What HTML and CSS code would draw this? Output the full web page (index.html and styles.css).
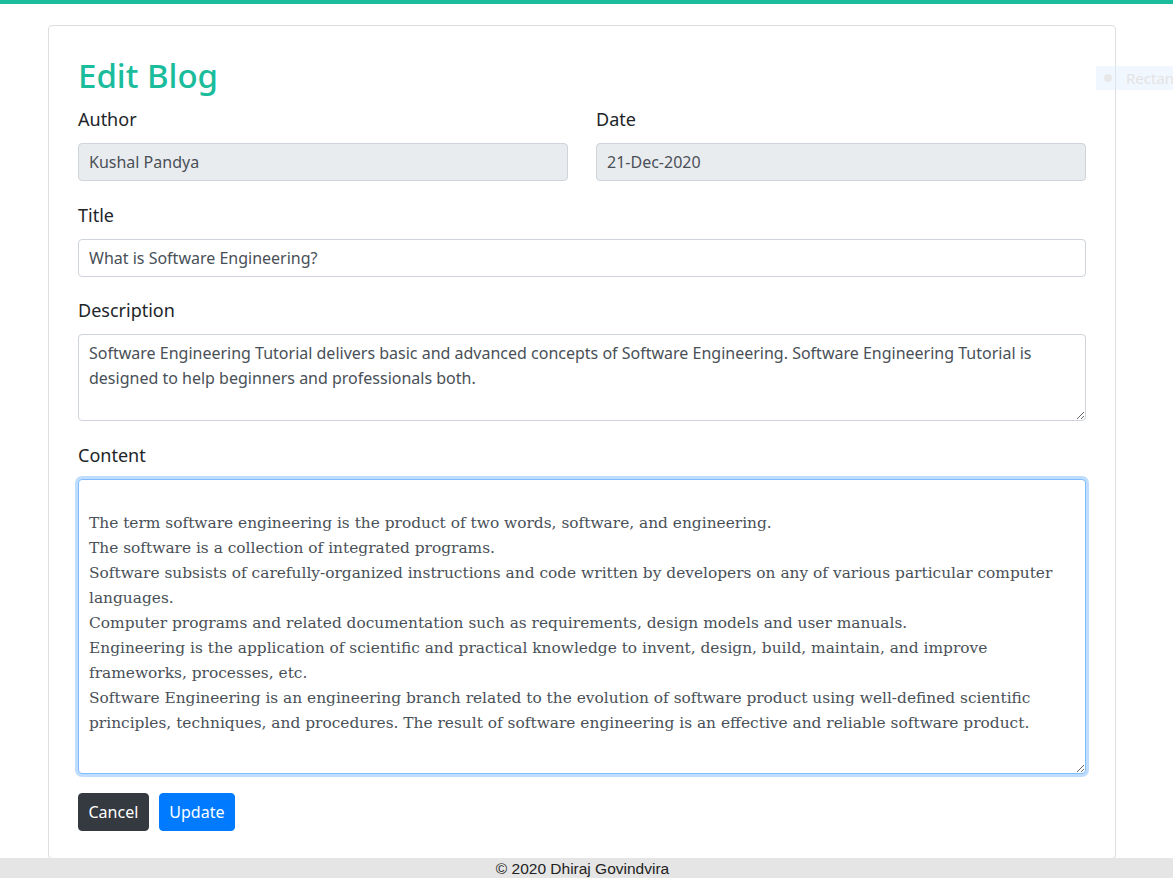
FILE: index.html
```html
<!DOCTYPE html>
<html lang="en">
<head>
<meta charset="utf-8">
<title>Edit Blog</title>
<link rel="stylesheet" href="styles.css">
</head>
<body>
<div class="topbar"></div>
<main class="card">
  <h1 class="title">Edit Blog</h1>
  <div class="row">
    <div class="group col">
      <label class="label">Author</label>
      <input class="control" type="text" value="Kushal Pandya" disabled>
    </div>
    <div class="group col">
      <label class="label">Date</label>
      <input class="control" type="text" value="21-Dec-2020" disabled>
    </div>
  </div>
  <div class="group">
    <label class="label">Title</label>
    <input class="control" type="text" value="What is Software Engineering?">
  </div>
  <div class="group group-wide">
    <label class="label">Description</label>
    <textarea class="control desc" rows="3">Software Engineering Tutorial delivers basic and advanced concepts of Software Engineering. Software Engineering Tutorial is
designed to help beginners and professionals both.</textarea>
  </div>
  <div class="group">
    <label class="label">Content</label>
    <textarea class="control content focused">

The term software engineering is the product of two words, software, and engineering.
The software is a collection of integrated programs.
Software subsists of carefully-organized instructions and code written by developers on any of various particular computer
languages.
Computer programs and related documentation such as requirements, design models and user manuals.
Engineering is the application of scientific and practical knowledge to invent, design, build, maintain, and improve
frameworks, processes, etc.
Software Engineering is an engineering branch related to the evolution of software product using well-defined scientific
principles, techniques, and procedures. The result of software engineering is an effective and reliable software product.</textarea>
  </div>
  <div class="actions">
    <button class="btn btn-dark" type="button">Cancel</button>
    <button class="btn btn-primary" type="button">Update</button>
  </div>
</main>
<footer class="footer">© 2020 Dhiraj Govindvira</footer>
<div class="overlay"><span class="overlay-dot"></span><span class="overlay-text">Rectangle</span></div>
</body>
</html>
```
FILE: styles.css
```css
html, body {
  margin: 0;
  padding: 0;
}
body {
  width: 1173px;
  height: 878px;
  overflow: hidden;
  background: #fff;
  font-family: "Noto Sans", "Open Sans", sans-serif;
  color: #212529;
  position: relative;
}
.topbar {
  height: 4px;
  background: #1abc9c;
}
.card {
  box-sizing: border-box;
  width: 1068px;
  margin: 21px 0 0 48px;
  padding: 30px 29px 27px 29px;
  border: 1px solid #dcdfe2;
  border-radius: 4px;
  box-shadow: 0 1px 1px rgba(0,0,0,0.06);
  display: flex;
  flex-direction: column;
}
.title {
  margin: 0 0 9px 0;
  font-size: 33px;
  line-height: 40px;
  font-weight: 500;
  color: #1abc9c;
}
.row {
  display: flex;
  gap: 28px;
  margin-bottom: 20px;
}
.col {
  flex: 1 1 0;
}
.group {
  display: flex;
  flex-direction: column;
  margin-bottom: 19px;
}
.group-wide {
  margin-bottom: 20px;
}
.row .group {
  margin-bottom: 0;
}
.label {
  font-size: 18px;
  line-height: 29px;
  margin-bottom: 9px;
  color: #212529;
}
.control {
  box-sizing: border-box;
  width: 100%;
  height: 38px;
  padding: 6px 12px 6px 10px;
  font-family: "Noto Sans", "Open Sans", sans-serif;
  font-size: 16px;
  line-height: 25px;
  color: #495057;
  background: #fff;
  border: 1px solid #ced4da;
  border-radius: 4px;
  margin: 0;
}
.control:disabled {
  background: #e9ecef;
  color: #495057;
  opacity: 1;
}
.desc {
  height: 87px;
  resize: vertical;
}
.content {
  height: 295px;
  padding-left: 10px;
  padding-right: 10px;
  font-family: "DejaVu Serif", serif;
  font-size: 15.4px;
  line-height: 25px;
  resize: vertical;
}
.focused {
  border-color: #80bdff;
  box-shadow: 0 0 0 3px rgba(0,123,255,0.25);
  outline: none;
}
.actions {
  display: flex;
  gap: 10px;
}
.btn {
  height: 38px;
  padding: 0 9.5px;
  font-family: "Noto Sans", "Open Sans", sans-serif;
  font-size: 16px;
  color: #fff;
  border: 1px solid transparent;
  border-radius: 4px;
}
.btn-dark {
  background: #343a40;
  border-color: #343a40;
}
.btn-primary {
  background: #007bff;
  border-color: #007bff;
}
.footer {
  height: 21px;
  background: #e5e5e5;
  text-align: center;
  padding-right: 8px;
  font-family: "Liberation Sans", Arial, sans-serif;
  font-size: 15.5px;
  line-height: 22px;
  color: #222;
  margin-top: -1px;
}
.overlay {
  position: absolute;
  top: 66px;
  left: 1096px;
  width: 77px;
  height: 24px;
  overflow: hidden;
  white-space: nowrap;
  background: rgba(225, 238, 255, 0.45);
  display: flex;
  align-items: center;
  gap: 14px;
  padding-left: 8px;
  box-sizing: border-box;
}
.overlay-dot {
  flex: none;
  width: 8px;
  height: 8px;
  border-radius: 50%;
  background: #e8e8e8;
}
.overlay-text {
  font-size: 15px;
  color: #e3e3e3;
}
```
